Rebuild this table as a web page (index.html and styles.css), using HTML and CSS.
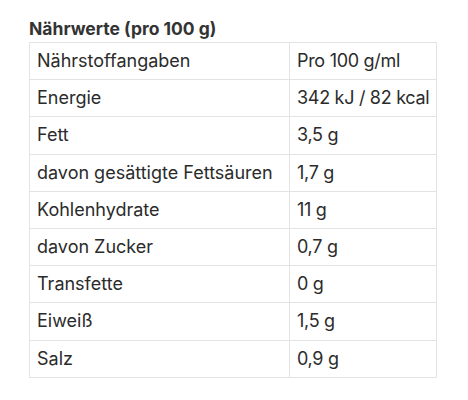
FILE: index.html
```html
<!DOCTYPE html>
<html lang="de">
<head>
<meta charset="utf-8">
<link rel="stylesheet" href="styles.css">
</head>
<body>
<div class="panel">
  <h3 class="title">Nährwerte (pro 100 g)</h3>
  <table class="nutri">
    <tbody>
      <tr><td>Nährstoffangaben</td><td>Pro 100 g/ml</td></tr>
      <tr><td>Energie</td><td>342 kJ / 82 kcal</td></tr>
      <tr><td>Fett</td><td>3,5 g</td></tr>
      <tr><td>davon gesättigte Fettsäuren</td><td>1,7 g</td></tr>
      <tr><td>Kohlenhydrate</td><td>11 g</td></tr>
      <tr><td>davon Zucker</td><td>0,7 g</td></tr>
      <tr><td>Transfette</td><td>0 g</td></tr>
      <tr><td>Eiweiß</td><td>1,5 g</td></tr>
      <tr><td>Salz</td><td>0,9 g</td></tr>
    </tbody>
  </table>
</div>
</body>
</html>
```
FILE: styles.css
```css
html, body {
  margin: 0;
  padding: 0;
  background: #ffffff;
}
body {
  font-family: Inter, "Noto Sans", sans-serif;
  color: #2b2b2b;
}
.panel {
  padding: 15px 0 0 29px;
}
.title {
  margin: 0;
  font-size: 17.5px;
  font-weight: 700;
  line-height: 27px;
  color: #333333;
}
.nutri {
  border-collapse: collapse;
  table-layout: fixed;
  width: 408px;
  font-size: 18px;
}
.nutri tr {
  height: 37.2px;
}
.nutri td {
  border: 1px solid #e3e3e3;
  padding: 0 7px;
  vertical-align: middle;
  line-height: 22px;
  white-space: nowrap;
}
.nutri td:first-child {
  width: 245px;
}
.nutri td:last-child {
  letter-spacing: -0.3px;
}
```
